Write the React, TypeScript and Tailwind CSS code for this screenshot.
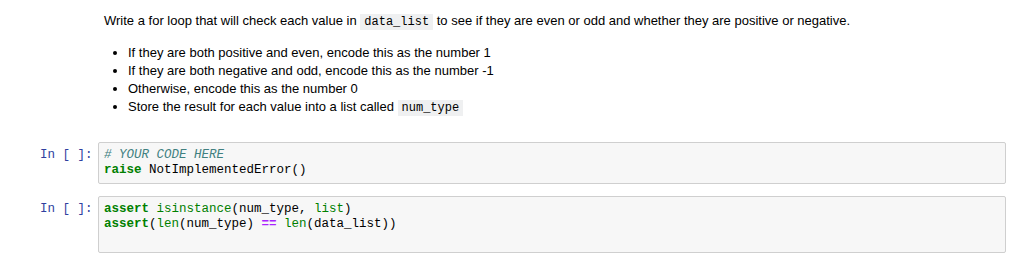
import React from 'react';

const mono = "font-['Liberation_Mono',monospace]";

const bullets: React.ReactNode[] = [
  'If they are both positive and even, encode this as the number 1',
  'If they are both negative and odd, encode this as the number -1',
  'Otherwise, encode this as the number 0',
  <>
    Store the result for each value into a list called{' '}
    <code className={`${mono} text-[12px] bg-[#eff0f1] px-[4px] py-[1px]`}>num_type</code>
  </>,
];

const Kw = ({ children }: { children: React.ReactNode }) => (
  <span className="text-[#008000] font-bold">{children}</span>
);
const Bi = ({ children }: { children: React.ReactNode }) => (
  <span className="text-[#008000]">{children}</span>
);

const CodeCell = ({ lines }: { lines: React.ReactNode[] }) => (
  <div className="flex items-start">
    <div className={`${mono} w-[98px] pl-[40px] pt-[6px] text-[12.5px] leading-[15px] text-[#303F9F]`}>
      In [ ]:
    </div>
    <div
      className={`${mono} w-[908px] bg-[#f7f7f7] border border-[#cfcfcf] rounded-[2px] px-[5px] py-[5px] text-[12.5px] leading-[15px] text-black whitespace-pre`}
    >
      {lines.map((l, i) => (
        <div key={i} className="h-[15px]">
          {l}
        </div>
      ))}
    </div>
  </div>
);

export default function App() {
  return (
    <div className="w-[1024px] h-[262px] bg-white overflow-hidden font-['Liberation_Sans',Arial,sans-serif] text-[13px] text-black">
      {/* markdown cell */}
      <div className="pl-[104px] pt-[12px]">
        <p className="leading-[18px]">
          Write a for loop that will check each value in{' '}
          <code className={`${mono} text-[12px] bg-[#eff0f1] px-[4px] py-[1px]`}>data_list</code> to see if they
          are even or odd and whether they are positive or negative.
        </p>
        <ul className="mt-[13px] pl-[24px] list-disc leading-[18px]">
          {bullets.map((b, i) => (
            <li key={i}>{b}</li>
          ))}
        </ul>
      </div>

      <div className="mt-[25px] flex flex-col gap-[12px]">
        <CodeCell
          lines={[
            <span className="italic text-[#408080]"># YOUR CODE HERE</span>,
            <>
              <Kw>raise</Kw> NotImplementedError()
            </>,
          ]}
        />
        <CodeCell
          lines={[
            <>
              <Kw>assert</Kw> <Bi>isinstance</Bi>(num_type, <Bi>list</Bi>)
            </>,
            <>
              <Kw>assert</Kw>(<Bi>len</Bi>(num_type) <span className="text-[#AA22FF] font-bold">==</span>{' '}
              <Bi>len</Bi>(data_list))
            </>,
            '',
          ]}
        />
      </div>
    </div>
  );
}
